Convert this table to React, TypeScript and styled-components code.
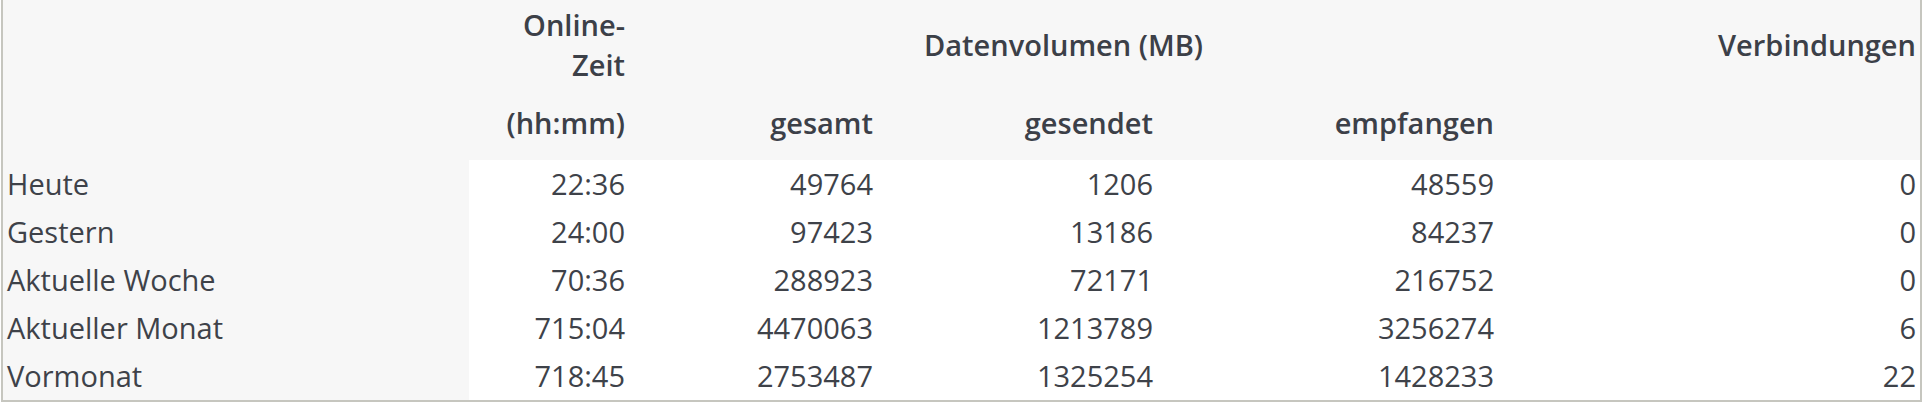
import styled, { createGlobalStyle } from 'styled-components';

const GlobalStyle = createGlobalStyle`
  html, body {
    margin: 0;
    padding: 0;
    background: #ffffff;
  }
  body {
    font-family: 'Open Sans', 'Noto Sans', sans-serif;
    color: #3e4249;
  }
`;

const Frame = styled.div`
  width: 1921px;
  margin-left: 1px;
  box-sizing: border-box;
  border: 2px solid #c6c6bf;
  border-top: none;
  background: #f7f7f7;
`;

const Table = styled.table`
  width: 100%;
  border-collapse: collapse;
  table-layout: fixed;
  font-size: 29px;
`;

const HeadRowTop = styled.tr`
  height: 90px;
`;

const HeadRowBottom = styled.tr`
  height: 70px;
`;

const Th = styled.th<{ align?: 'left' | 'right' | 'center'; $bottom?: boolean }>`
  font-weight: 600;
  line-height: 40px;
  padding: ${(p) => (p.$bottom ? '0 4px 17px 4px' : '0 4px')};
  text-align: ${(p) => p.align || 'right'};
  vertical-align: ${(p) => (p.$bottom ? 'bottom' : 'middle')};
  color: #3c4048;
`;

const DataRow = styled.tr`
  height: 48px;
`;

const Label = styled.td`
  padding: 0 4px;
  text-align: left;
  font-weight: 400;
  line-height: 48px;
  white-space: nowrap;
`;

const Num = styled.td`
  padding: 0 4px;
  text-align: right;
  background: #ffffff;
  font-weight: 400;
  line-height: 48px;
  white-space: nowrap;
`;

const rows = [
  ['Heute', '22:36', '49764', '1206', '48559', '0'],
  ['Gestern', '24:00', '97423', '13186', '84237', '0'],
  ['Aktuelle Woche', '70:36', '288923', '72171', '216752', '0'],
  ['Aktueller Monat', '715:04', '4470063', '1213789', '3256274', '6'],
  ['Vormonat', '718:45', '2753487', '1325254', '1428233', '22'],
];

const widths = [466, 160, 248, 280, 341, 422];

export default function App() {
  return (
    <>
      <GlobalStyle />
      <Frame>
        <Table>
          <colgroup>
            {widths.map((w, i) => (
              <col key={i} style={{ width: w }} />
            ))}
          </colgroup>
          <thead>
            <HeadRowTop>
              <Th align="left"></Th>
              <Th>Online-<br />Zeit</Th>
              <Th align="center" colSpan={3}>Datenvolumen (MB)</Th>
              <Th>Verbindungen</Th>
            </HeadRowTop>
            <HeadRowBottom>
              <Th $bottom align="left"></Th>
              <Th $bottom>(hh:mm)</Th>
              <Th $bottom>gesamt</Th>
              <Th $bottom>gesendet</Th>
              <Th $bottom>empfangen</Th>
              <Th $bottom></Th>
            </HeadRowBottom>
          </thead>
          <tbody>
            {rows.map((r) => (
              <DataRow key={r[0]}>
                <Label>{r[0]}</Label>
                {r.slice(1).map((v, i) => (
                  <Num key={i}>{v}</Num>
                ))}
              </DataRow>
            ))}
          </tbody>
        </Table>
      </Frame>
    </>
  );
}
